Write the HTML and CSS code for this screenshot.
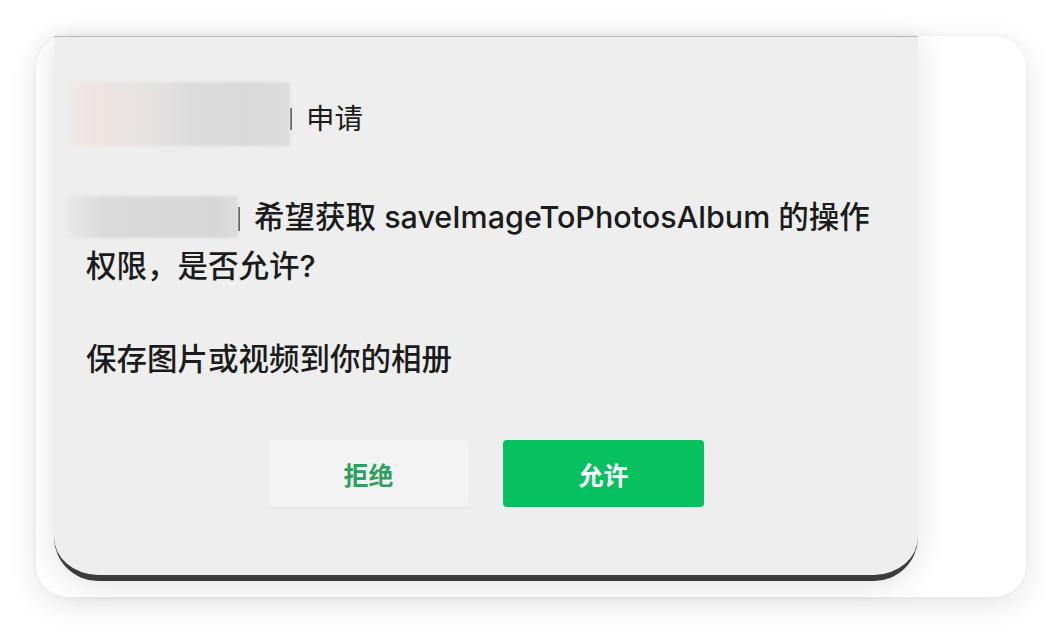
FILE: index.html
```html
<!DOCTYPE html>
<html lang="zh-CN">
<head>
<meta charset="utf-8">
<title>授权申请</title>
<link rel="stylesheet" href="styles.css">
</head>
<body>
<div class="card">
  <div class="dialog">
    <div class="title">
      <span class="blur blur-title"></span><span class="bar bar-title"></span><span class="title-text">申请</span>
    </div>
    <p class="desc desc-first"><span class="blur blur-name"></span><span class="bar bar-name"></span>希望获取 saveImageToPhotosAlbum 的操作权限，是否允许?</p>
    <p class="desc desc-second">保存图片或视频到你的相册</p>
    <div class="actions">
      <button class="btn btn-reject">拒绝</button>
      <button class="btn btn-allow">允许</button>
    </div>
  </div>
</div>
</body>
</html>
```

FILE: styles.css
```css
html, body {
  margin: 0;
  padding: 0;
  background: #ffffff;
}

body {
  font-family: "Inter", "Noto Sans CJK SC", sans-serif;
  color: #1b1b1b;
  width: 1062px;
  height: 634px;
  overflow: hidden;
}

.card {
  margin: 36px 0 0 36px;
  width: 990px;
  height: 561px;
  box-sizing: border-box;
  padding: 0 0 0 18px;
  background: #ffffff;
  border-radius: 32px;
  box-shadow: 0 8px 30px rgba(0, 0, 0, 0.10), 0 0 6px rgba(0, 0, 0, 0.04);
}

.dialog {
  width: 864px;
  box-sizing: border-box;
  background: #eeeeee;
  border-top: 1px solid #b9b9b9;
  border-bottom: 6px solid #3b3b3b;
  border-radius: 0 0 44px 44px;
  padding: 45px 32px 68px;
  box-shadow: 0 4px 30px rgba(0, 0, 0, 0.12);
  display: flex;
  flex-direction: column;
}

.title {
  display: flex;
  align-items: center;
  height: 64px;
}

.blur {
  display: inline-block;
  filter: blur(1.5px);
}

.blur-title {
  width: 222px;
  height: 64px;
  margin-left: -18px;
  background: linear-gradient(90deg, #eee9e8 0%, #efe4e2 12%, #e8e3e2 32%, #dcdcdc 55%, #d9d9d9 80%, #dcdcdc 100%);
}

.bar {
  display: inline-block;
  width: 2px;
  background: #555555;
}

.bar-title {
  height: 22px;
  margin: 10px 14px 0 0;
}

.title-text {
  font-size: 28.5px;
  line-height: 40px;
  padding-top: 10px;
}

.desc {
  margin: 0;
  font-size: 30.5px;
  line-height: 49px;
  font-weight: 500;
}

.desc-first {
  margin-top: 46px;
}

.desc-second {
  margin-top: 44px;
}

.blur-name {
  width: 172px;
  height: 42px;
  margin-left: -20px;
  vertical-align: -10px;
  background: linear-gradient(90deg, #e9e9e9 0%, #dadada 22%, #d8d8d8 60%, #d6d6d6 85%, #dcdcdc 100%);
}

.bar-name {
  height: 24px;
  margin-right: 14px;
  vertical-align: -3px;
}

.actions {
  margin-top: 57px;
  display: flex;
  justify-content: center;
  gap: 34px;
}

.btn {
  width: 201px;
  height: 67px;
  border: none;
  border-radius: 4px;
  font-family: "Noto Sans CJK SC", sans-serif;
  font-size: 25px;
  font-weight: 700;
  padding: 0;
}

.btn-reject {
  background: #f3f3f3;
  color: #2f9e5f;
  box-shadow: 0 1px 3px rgba(0, 0, 0, 0.05);
}

.btn-allow {
  background: #07c160;
  color: #ffffff;
}
```
